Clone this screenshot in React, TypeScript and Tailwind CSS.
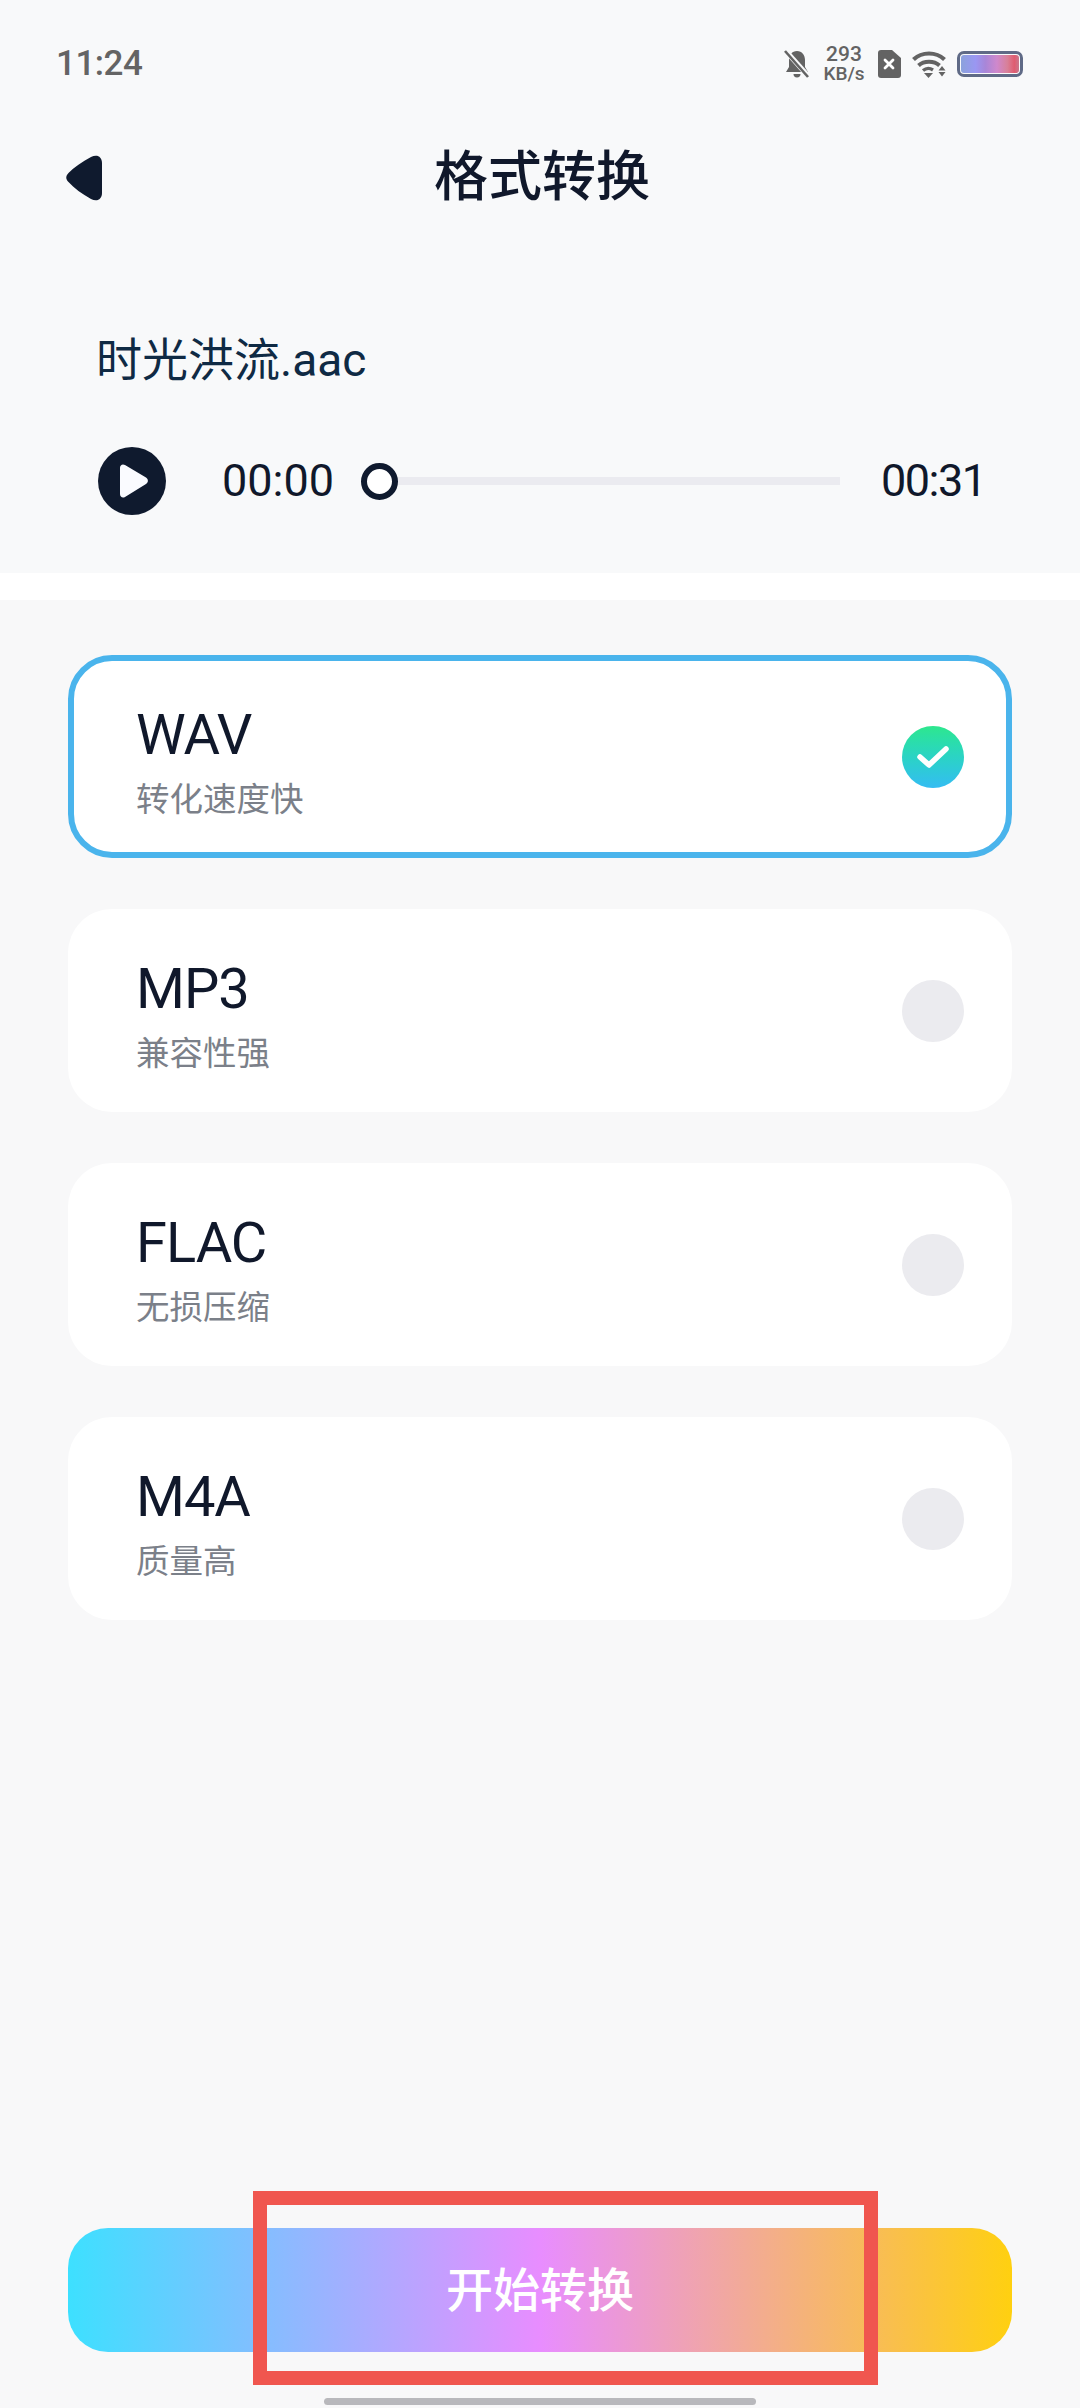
import React from 'react';

const formats = [
  { name: 'WAV', desc: '转化速度快', selected: true },
  { name: 'MP3', desc: '兼容性强', selected: false },
  { name: 'FLAC', desc: '无损压缩', selected: false },
  { name: 'M4A', desc: '质量高', selected: false },
];

const FONT = "font-['Roboto','Noto_Sans_CJK_SC',sans-serif]";

const StatusIcons = () => (
  <div className="flex items-center text-[#636363]">
    {/* muted bell */}
    <svg width="28" height="30" viewBox="0 0 28 30" className="mr-[14px]">
      <path d="M14 2c5 0 8 4 8 9v7l3 5H3l3-5v-7c0-5 3-9 8-9z" fill="#636363" />
      <path d="M10.500 25a3.500 3.500 0 0 0 7 0z" fill="#636363" />
      <path d="M2 1l24 27" stroke="#f8f9fa" strokeWidth="5" />
      <path d="M2 2l23 26" stroke="#636363" strokeWidth="2.600" />
    </svg>
    {/* network speed */}
    <div className="flex flex-col items-center w-[38px] mr-[15px]">
      <span className="text-[21px] leading-[19px] font-medium">293</span>
      <span className="text-[19px] leading-[19px] font-medium">KB/s</span>
    </div>
    {/* sim with x */}
    <svg width="23" height="28" viewBox="0 0 23 28" className="mr-[11px]">
      <path d="M3 0h11l9 8v17a3 3 0 0 1-3 3H3a3 3 0 0 1-3-3V3a3 3 0 0 1 3-3z" fill="#636363" />
      <path d="M7 10l8 8M15 10l-8 8" stroke="#fff" strokeWidth="2.800" strokeLinecap="round" />
    </svg>
    {/* wifi */}
    <svg width="34" height="28" viewBox="0 0 34 28" fill="none" className="mr-[11px]">
      <path d="M1.500 9.500C10 1.500 24 1.500 32.500 9.500" stroke="#636363" strokeWidth="4.200" />
      <path d="M6.500 15.500C12 10.500 22 10.500 27.500 15.500" stroke="#636363" strokeWidth="4" />
      <path d="M11 20.500C14 18 18 18 21 20" stroke="#636363" strokeWidth="3.400" />
      <path d="M12 23h9l-4.500 5z" fill="#636363" />
      <path d="M30 16l3.500 4.500h-7zM26.500 22h7L30 26.500z" fill="#636363" />
    </svg>
    {/* battery */}
    <div className="w-[66px] h-[26px] rounded-[7px] border-[3px] border-[#5f6a86] p-[1px]">
      <div className="h-full rounded-[3px] bg-[linear-gradient(90deg,#8ba2dc_0%,#9a97f2_25%,#a886d8_42%,#cf88cc_62%,#d88098_80%,#e05c70_92%,#c9778c_100%)]" />
    </div>
  </div>
);

const FormatCard = ({ name, desc, selected }: { name: string; desc: string; selected: boolean }) => (
  <div
    className={`h-[203px] rounded-[44px] bg-white flex items-center justify-between ${
      selected ? 'border-[6px] border-[#4ab4ec] pl-[62px] pr-[42px]' : 'pl-[68px] pr-[48px]'
    }`}
  >
    <div className="flex flex-col pt-[12px]">
      <span className="text-[56px] leading-[64px] text-[#10182b] tracking-[-1px]">{name}</span>
      <span className="text-[33.500px] leading-[44px] text-[#7b8089] mt-[11px]">{desc}</span>
    </div>
    {selected ? (
      <div className="w-[62px] h-[62px] rounded-full bg-gradient-to-b from-[#2ee78d] to-[#35bcf2] flex items-center justify-center">
        <svg width="34" height="26" viewBox="0 0 34 26" fill="none">
          <path d="M4 13l9 8L30 5" stroke="#fff" strokeWidth="5.500" strokeLinecap="round" strokeLinejoin="round" />
        </svg>
      </div>
    ) : (
      <div className="w-[62px] h-[62px] rounded-full bg-[#ebebef]" />
    )}
  </div>
);

export default function App() {
  return (
    <div className={`relative w-[1080px] h-[2408px] flex flex-col bg-[#f8f9fa] overflow-hidden ${FONT}`}>
      {/* Status bar */}
      <div className="h-[128px] flex items-center justify-between pl-[56px] pr-[57px] shrink-0">
        <span className="text-[35px] font-medium text-[#646464] tracking-[-0.5px]">11:24</span>
        <StatusIcons />
      </div>

      {/* Title bar */}
      <div className="h-[100px] grid grid-cols-[1fr_auto_1fr] items-center pl-[65px] pr-[61px] shrink-0">
        <svg width="38" height="46" viewBox="0 0 38 46">
          <path
            d="M26 2C32 -1 37 1.500 37 8v30c0 6.500-5 9-11 6C17 39 9 33 3.500 27c-3-3-3-6 0-9C9 12 17 7 26 2z"
            fill="#0f1a2e"
          />
        </svg>
        <span className="text-[54px] leading-none font-medium text-[#10182b]">格式转换</span>
        <span />
      </div>

      {/* Player */}
      <div className="h-[345px] pl-[98px] pr-[97px] pt-[104px] shrink-0">
        <div className="text-[46px] leading-[56px] text-[#0f2a44] -ml-[2px]">时光洪流.aac</div>
        <div className="flex items-center mt-[59px] h-[68px]">
          <div className="w-[68px] h-[68px] rounded-full bg-[#0f1a2e] flex items-center justify-center shrink-0">
            <svg width="30" height="34" viewBox="0 0 30 34" className="ml-[3px]">
              <path d="M1 4c0-3 2.500-4.500 5-3l21 12.500c2.500 1.500 2.500 5 0 6.500L6 33c-2.500 1.500-5 0-5-3z" fill="#fafbff" />
            </svg>
          </div>
          <span className="ml-[56px] w-[139px] text-[45px] font-normal text-[#10182b] shrink-0">00:00</span>
          <div className="w-[37px] h-[37px] rounded-full border-[6px] border-[#0f1a2e] bg-white shrink-0" />
          <div className="w-[442px] h-[8px] bg-[#ebebf0] shrink-0" />
          <span className="ml-[41px] text-[45px] font-normal tracking-[-1.500px] text-[#10182b] shrink-0">00:31</span>
        </div>
      </div>

      <div className="h-[27px] bg-white shrink-0" />

      {/* Format options + action */}
      <div className="flex-1 flex flex-col px-[68px] pt-[55px] bg-[#f8f8f9]">
        <div className="flex flex-col gap-[51px]">
          {formats.map((f) => (
            <FormatCard key={f.name} {...f} />
          ))}
        </div>
        <button className="mt-auto h-[124px] pt-[2px] rounded-[40px] flex items-center justify-center bg-[linear-gradient(90deg,#3de0ff_0%,#e88dff_50%,#ffd010_100%)] text-[47px] font-medium text-white">
          开始转换
        </button>
        <div className="mt-[46px] mb-[3px] mx-[256px] h-[7px] rounded-full bg-[#b8b8bc]" />
      </div>

      {/* Annotation box over the button */}
      <div className="absolute left-[253px] top-[2191px] w-[625px] h-[194px] border-[14px] border-[#f0564f]" />
    </div>
  );
}
